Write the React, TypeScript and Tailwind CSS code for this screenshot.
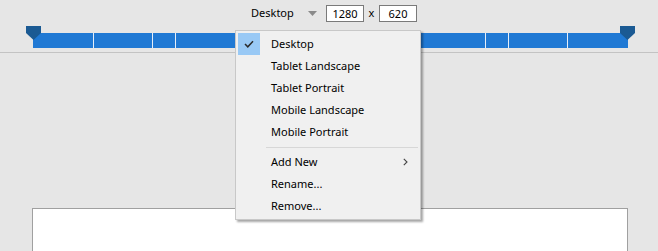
import React from 'react';

const font = { fontFamily: '"Segoe UI", "Noto Sans", "Liberation Sans", sans-serif' };

const Marker: React.FC<{ className: string }> = ({ className }) => (
    <svg className={className} width="15" height="14" viewBox="0 0 15 14">
        <polygon points="0,0 15,0 15,7 7.5,14 0,7" fill="#1b5a93" />
    </svg>
);

const MenuItem: React.FC<{ label: string; checked?: boolean; sub?: boolean }> = ({ label, checked, sub }) => (
    <div className="flex items-center h-[22px] pl-[2px] pr-[12px]">
        <div className={`w-[22px] h-[22px] flex items-center justify-center ${checked ? 'bg-[#99c9f5]' : ''}`}>
            {checked && (
                <svg width="10" height="8" viewBox="0 0 10 8">
                    <path d="M1 4 L3.8 6.8 L9 1.2" stroke="#2b2b2b" strokeWidth="1.5" fill="none" />
                </svg>
            )}
        </div>
        <span className="ml-[11px] flex-1 text-[11px] text-black">{label}</span>
        {sub && (
            <svg width="5" height="8" viewBox="0 0 5 8">
                <path d="M0.8 0.8 L4 4 L0.8 7.2" stroke="#444" strokeWidth="1.1" fill="none" />
            </svg>
        )}
    </div>
);

const App: React.FC = () => {
    const dividers = [60, 119, 142, 452, 475, 534];

    return (
        <div className="relative w-[658px] h-[251px] overflow-hidden bg-[#e6e6e6]" style={font}>
            {/* Toolbar */}
            <div className="h-[26px] flex items-center pl-[251px] pt-[1px] text-[11px] text-black">
                <span className="w-[42px]">Desktop</span>
                <svg className="ml-[15px]" width="9" height="5" viewBox="0 0 9 5">
                    <polygon points="0,0 9,0 4.5,5" fill="#8a8a8a" />
                </svg>
                <div className="ml-[9px] w-[38px] h-[17px] bg-white border border-[#7a7a7a] flex items-center justify-center leading-none">1280</div>
                <span className="w-[15px] text-center">x</span>
                <div className="w-[38px] h-[17px] bg-white border border-[#7a7a7a] flex items-center justify-center leading-none">620</div>
            </div>

            {/* Ruler */}
            <div className="relative ml-[33px] mt-[7px] w-[595px] h-[15px] bg-[#2079d4]">
                {dividers.map((x) => (
                    <div key={x} className="absolute top-0 h-full w-px bg-[#e6eef8]" style={{ left: x }} />
                ))}
                <Marker className="absolute left-[-7px] top-[-7px]" />
                <Marker className="absolute right-[-7px] top-[-7px]" />
            </div>
            <div className="mt-[4px] h-px bg-[#c3c3c3]" />

            {/* Canvas */}
            <div className="ml-[32px] mt-[155px] w-[596px] h-[60px] bg-white border border-[#a0a0a0]" />

            {/* Dropdown menu */}
            <div className="absolute left-[235px] top-[30px] w-[186px] bg-[#f0f0f0] border border-[#c8c8c8] shadow-[2px_2px_2px_rgba(0,0,0,0.35)] pt-[2px] pb-[2px]">
                <MenuItem label="Desktop" checked />
                <MenuItem label="Tablet Landscape" />
                <MenuItem label="Tablet Portrait" />
                <MenuItem label="Mobile Landscape" />
                <MenuItem label="Mobile Portrait" />
                <div className="h-[8px] flex items-center pl-[30px] pr-[2px]">
                    <div className="h-px w-full bg-[#d7d7d7]" />
                </div>
                <MenuItem label="Add New" sub />
                <MenuItem label="Rename..." />
                <MenuItem label="Remove..." />
            </div>
        </div>
    );
};

export default App;
